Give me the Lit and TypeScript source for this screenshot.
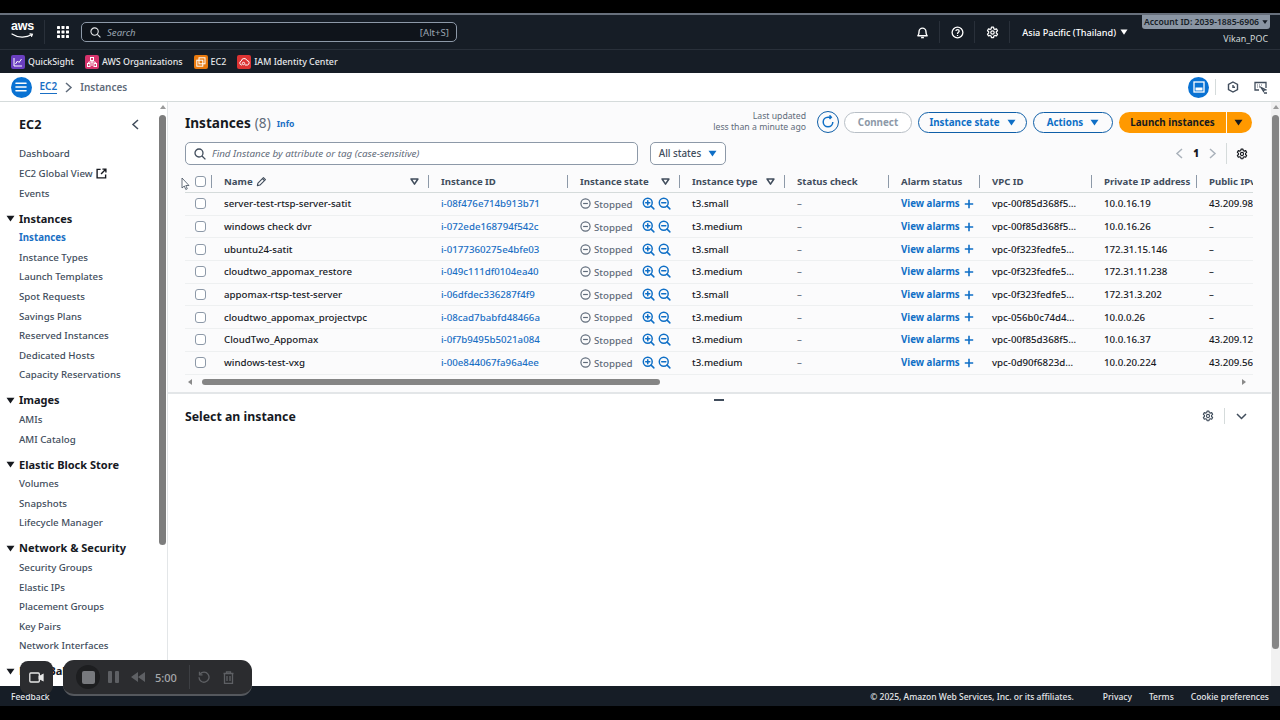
import { LitElement, html, css, svg } from 'lit';
import { customElement } from 'lit/decorators.js';

const rows = [
  ['server-test-rtsp-server-satit', 'i-08f476e714b913b71', 't3.small', 'vpc-00f85d368f5…', '10.0.16.19', '43.209.98'],
  ['windows check dvr', 'i-072ede168794f542c', 't3.medium', 'vpc-00f85d368f5…', '10.0.16.26', '–'],
  ['ubuntu24-satit', 'i-0177360275e4bfe03', 't3.small', 'vpc-0f323fedfe5…', '172.31.15.146', '–'],
  ['cloudtwo_appomax_restore', 'i-049c111df0104ea40', 't3.medium', 'vpc-0f323fedfe5…', '172.31.11.238', '–'],
  ['appomax-rtsp-test-server', 'i-06dfdec336287f4f9', 't3.small', 'vpc-0f323fedfe5…', '172.31.3.202', '–'],
  ['cloudtwo_appomax_projectvpc', 'i-08cad7babfd48466a', 't3.medium', 'vpc-056b0c74d4…', '10.0.0.26', '–'],
  ['CloudTwo_Appomax', 'i-0f7b9495b5021a084', 't3.medium', 'vpc-00f85d368f5…', '10.0.16.37', '43.209.12'],
  ['windows-test-vxg', 'i-00e844067fa96a4ee', 't3.medium', 'vpc-0d90f6823d…', '10.0.20.224', '43.209.56'],
];

const sideNav = [
  { items: ['Dashboard', 'EC2 Global View', 'Events'] },
  { title: 'Instances', items: ['Instances', 'Instance Types', 'Launch Templates', 'Spot Requests', 'Savings Plans', 'Reserved Instances', 'Dedicated Hosts', 'Capacity Reservations'] },
  { title: 'Images', items: ['AMIs', 'AMI Catalog'] },
  { title: 'Elastic Block Store', items: ['Volumes', 'Snapshots', 'Lifecycle Manager'] },
  { title: 'Network & Security', items: ['Security Groups', 'Elastic IPs', 'Placement Groups', 'Key Pairs', 'Network Interfaces'] },
  { title: 'Load Balancing', items: [] },
];

const headers = [
  { label: 'Name', filter: true, edit: true },
  { label: 'Instance ID' },
  { label: 'Instance state', filter: true },
  { label: 'Instance type', filter: true },
  { label: 'Status check' },
  { label: 'Alarm status' },
  { label: 'VPC ID' },
  { label: 'Private IP address' },
  { label: 'Public IPv4' },
];

const gear = (size: number, color = 'currentColor') => html`<svg width=${size} height=${size} viewBox="0 0 16 16" fill="none" stroke=${color} stroke-width="1.5" stroke-linejoin="round"><path d="M6.7 1.5h2.6l.4 2 1.3.7 1.9-.7 1.3 2.3-1.5 1.3v1.6l1.5 1.3-1.3 2.3-1.9-.7-1.3.7-.4 2H6.7l-.4-2-1.3-.7-1.9.7-1.3-2.3 1.5-1.3V7.1L1.8 5.8l1.3-2.3 1.9.7 1.3-.7z"/><circle cx="8" cy="8" r="2.1"/></svg>`;

const caret = (size: number, color: string) => html`<svg class="caret" width=${size} height=${size} viewBox="0 0 10 10"><path d="M.6 2h8.8L5 8.4z" fill=${color}/></svg>`;

const filterCaret = html`<svg class="filter" width="9" height="9" viewBox="0 0 10 10" fill="none" stroke="#414d5c" stroke-width="1.7" stroke-linejoin="round"><path d="M1.2 2.2h7.6L5 8z"/></svg>`;

const zoomIcon = (plus: boolean) => html`<svg width="13" height="13" viewBox="0 0 14 14" fill="none" stroke="#0f6fc6" stroke-width="1.6" stroke-linecap="round"><circle cx="6.2" cy="6.2" r="4.8"/><path d="M9.8 9.8l3 3M4 6.2h4.4"/>${plus ? svg`<path d="M6.2 4v4.4"/>` : ''}</svg>`;

const Chevron = (dir: 'l' | 'r', color: string) => html`<svg width="9" height="11" viewBox="0 0 9 11" fill="none" stroke=${color} stroke-width="1.5"><path d=${dir === 'l' ? 'M7 1L2 5.5 7 10' : 'M2 1l5 4.5L2 10'}/></svg>`;

@customElement('app-root')
export class AppRoot extends LitElement {
  static styles = css`
    :host {
      display: block;
      width: 1280px;
      height: 720px;
      overflow: hidden;
      position: relative;
      background: #000;
      font-family: 'Noto Sans', 'Open Sans', sans-serif;
      font-size: 10px;
      color: #16191f;
    }
    * { box-sizing: border-box; }
    svg { display: block; flex: none; }

    .page { display: flex; flex-direction: column; height: 720px; }
    .black-top { height: 13px; background: #000; flex: none; }
    .black-bottom { height: 14px; background: #000; flex: none; }
    .edge { height: 2px; background: #68707c; flex: none; }

    /* top nav */
    .nav {
      height: 35px; flex: none; background: #161d26; color: #e6e8ea;
      display: flex; align-items: center; position: relative;
      border-bottom: 1px solid #29303a;
    }
    .logo { width: 45px; height: 35px; display: flex; flex-direction: column; align-items: center; padding: 8px 0 0 1px; border-right: 1px solid #29303a; height: 24px; padding-top: 0; }
    .logo span { font: 700 12.5px/13px 'Liberation Sans', sans-serif; color: #fff; letter-spacing: -0.2px; }
    .apps { width: 36px; display: flex; justify-content: center; }
    .search {
      width: 376px; height: 20px; border: 1px solid #8d99a8; border-radius: 5px;
      display: flex; align-items: center; gap: 6px; padding: 0 7px 0 8px;
      color: #9aa5b1; font-size: 9.6px; background: #0f141b;
    }
    .search em { flex: 1; font-style: italic; }
    .nav-right { margin-left: auto; display: flex; align-items: center; height: 24px; color: #fff; }
    .nav-icon { width: 35px; height: 22px; display: flex; align-items: center; justify-content: center; border-right: 1px solid #29303a; }
    .nav-icon.last { margin-right: 12px; }
    .region { display: flex; align-items: center; gap: 4px; font-size: 9.1px; font-weight: 500; margin-right: 152px; }
    .account {
      position: absolute; right: 10px; top: 0; width: 128px; height: 14px;
      background: #8a95a3; color: #161d26; font-size: 8.6px; font-weight: 600;
      border-radius: 0 0 3px 3px; display: flex; align-items: center; justify-content: center; gap: 3px;
    }
    .user { position: absolute; right: 12px; top: 17px; font-size: 8.9px; color: #d5dbdb; }

    /* bookmarks */
    .marks {
      height: 23px; flex: none; background: #161d26; color: #e6e8ea;
      display: flex; align-items: center; padding-left: 11px; gap: 11px; font-size: 8.9px; font-weight: 500;
    }
    .mark { display: flex; align-items: center; gap: 3px; }
    .mark i { width: 14px; height: 14px; border-radius: 2px; display: flex; align-items: center; justify-content: center; }

    /* breadcrumb */
    .crumbs {
      height: 29px; flex: none; background: #fff; border-bottom: 1px solid #d5dbdb;
      display: flex; align-items: center; padding: 0 13px 0 10.5px; font-size: 10px;
    }
    .round { width: 21px; height: 21px; border-radius: 50%; background: #0972d3; display: flex; align-items: center; justify-content: center; }
    .crumb-link { color: #1a6fc4; font-weight: 600; border-bottom: 1px solid #1a6fc4; margin-left: 8px; line-height: 13px; }
    .crumb-sep { margin: 0 7px; }
    .crumb-now { color: #5f6b7a; font-weight: 600; }
    .crumb-right { margin-left: auto; display: flex; align-items: center; }
    .vline { width: 1px; background: #d5dbdb; }

    /* body */
    .body { flex: 1; display: flex; min-height: 0; background: #fff; }
    .side { width: 168px; flex: none; position: relative; border-right: 1px solid #e3e6e8; display: flex; overflow: hidden; }
    .side-list { flex: 1; min-width: 0; padding-left: 19px; }
    .side-title { display: flex; justify-content: space-between; align-items: center; height: 20px; margin: 12px 0 10.2px; padding-right: 18px; font-size: 12.6px; font-weight: 700; color: #16191f; }
    .side-head { position: relative; height: 19.6px; margin-top: 5.4px; display: flex; align-items: center; font-size: 11px; font-weight: 700; color: #16191f; white-space: nowrap; }
    .side-head svg { position: absolute; left: -13px; top: 6px; }
    .side-item { height: 19.6px; display: flex; align-items: center; gap: 3px; font-size: 9.7px; color: #414d5c; white-space: nowrap; font-weight: 500; }
    .side-item.on { color: #1a6fc4; font-weight: 700; }
    .sbar { width: 9px; flex: none; display: flex; flex-direction: column; align-items: center; }
    .sbar .up { width: 0; height: 0; border: 3px solid transparent; border-top: 0; border-bottom: 4px solid #9a9a9a; margin-top: 3px; }
    .sbar .thumb { width: 7px; background: #7d7d7d; border-radius: 4px; margin-top: 6px; }
    .side .sbar { margin-right: 0; }
    .side .sbar .thumb { height: 430px; }
    .page-bar { background: #f1f1f1; }
    .page-bar .thumb { height: 534px; background: #858585; }

    .main { flex: 1; min-width: 0; display: flex; flex-direction: column; background: #fff; }
    .top-panel { height: 292px; flex: none; background: #fbfbfc; border-bottom: 2px solid #e3e6e8; padding: 0 19px 0 17px; }
    .title-row { height: 40px; display: flex; align-items: center; padding-top: 0; }
    .title { font-size: 13.6px; font-weight: 700; color: #16191f; }
    .count { font-size: 13.6px; color: #5f6b7a; margin-left: 4px; font-weight: 400; }
    .info { color: #1a6fc4; font-size: 8.6px; font-weight: 700; margin-left: 6px; padding-top: 3px; }
    .actions { margin-left: auto; display: flex; align-items: center; gap: 6px; }
    .updated { text-align: right; font-size: 8.7px; line-height: 11.5px; color: #5f6b7a; margin-right: 5px; }
    .btn {
      height: 21px; border-radius: 11px; border: 1.5px solid #0f5fa8; color: #0f6fc6;
      font-size: 9.8px; font-weight: 700; display: flex; align-items: center; justify-content: center; gap: 7px;
    }
    .btn.off { width: 68px; border-color: #b8bfc6; color: #8d99a8; background: #fff; }
    .btn.refresh { width: 22px; height: 22px; border-radius: 50%; margin-right: 0; padding: 0; }
    .launch { display: flex; height: 21px; color: #16191f; font-size: 9.8px; font-weight: 700; gap: 1px; }
    .launch div { background: #ff9900; display: flex; align-items: center; justify-content: center; }
    .launch .l { width: 107px; border-radius: 11px 0 0 11px; }
    .launch .r { width: 25px; border-radius: 0 11px 11px 0; padding-right: 2px; }

    .filter-row { height: 23px; display: flex; align-items: center; margin-top: 0; }
    .find {
      width: 453px; height: 23px; border: 1px solid #8d99a8; border-radius: 5px; background: #fff;
      display: flex; align-items: center; gap: 6px; padding-left: 8px; color: #5f6b7a; font-size: 9.8px; font-style: italic;
    }
    .states {
      width: 76px; height: 23px; margin-left: 12px; border: 1px solid #8d99a8; border-radius: 5px; background: #fff;
      display: flex; align-items: center; justify-content: center; gap: 7px; font-size: 9.8px; color: #414d5c; font-weight: 500;
    }
    .pager { margin-left: auto; display: flex; align-items: center; height: 23px; font-size: 9.8px; font-weight: 700; }
    .pager b { width: 24px; text-align: center; }
    .pager .vline { height: 21px; margin: 0 9px 0 9px; }

    .table { margin-top: 6px; overflow: hidden; width: 1068px; }
    .row {
      display: grid;
      grid-template-columns: 27px 217px 139px 112px 105px 104px 91px 112px 105px 56px;
      height: 22.7px; align-items: center; border-bottom: 1px solid #eef0f1;
      font-size: 9.7px; color: #16191f; white-space: nowrap; font-weight: 500;
    }
    .row.head { height: 22px; border-bottom: 1px solid #d5dbdb; font-weight: 700; color: #414d5c; font-size: 9.6px; }
    .row > div { padding-left: 12px; overflow: hidden; min-width: 0; }
    .row > .check { padding-left: 10px; }
    .box { width: 11px; height: 11px; border: 1px solid #8d99a8; border-radius: 3px; background: #fff; }
    .hcell { position: relative; display: flex; align-items: center; gap: 3px; height: 13px; padding-right: 9px; }
    .hcell.div::after, .check.div::after { content: ''; position: absolute; right: 0; top: 0; bottom: 0; width: 1px; background: #8d99a8; }
    .check.div { position: relative; height: 13px; display: flex; align-items: center; }
    .filter { margin-left: auto; margin-right: 1px; }
    .link { color: #1a6fc4; font-weight: 500; }
    .alarm { color: #0f6fc6; font-weight: 700; display: flex; align-items: center; gap: 4px; }
    .state { display: flex; align-items: center; color: #5f6b7a; }
    .state span { margin: 1px 9px 0 3px; }
    .state svg + span + svg { margin-right: 3px; }
    .muted { color: #5f6b7a; }

    .hscroll { height: 14px; margin-top: 0; display: flex; align-items: center; position: relative; padding: 0 3px; margin-top: 0; }
    .hthumb { width: 458px; height: 6px; margin-left: 10px; border-radius: 3px; background: #858585; }
    .arr { width: 0; height: 0; border: 3px solid transparent; }
    .arr.l { border-left: 0; border-right: 4px solid #8a8a8a; }
    .arr.r { border-right: 0; border-left: 4px solid #8a8a8a; margin-left: auto; margin-right: 3px; }

    .bottom { flex: 1; background: #fff; padding: 0 19px 0 17px; position: relative; }
    .grip { position: absolute; left: 546px; top: 5px; width: 10px; height: 2px; background: #414d5c; }
    .bottom-row { height: 44px; display: flex; align-items: center; }
    .bottom-row h2 { margin: 0; font-size: 12.3px; font-weight: 700; color: #16191f; }
    .bottom-tools { margin-left: auto; display: flex; align-items: center; }
    .bottom-tools .vline { height: 16px; margin: 0 11px 0 10px; }

    .foot {
      height: 20px; flex: none; background: #161d26; color: #e6e8ea; font-size: 8.5px;
      display: flex; align-items: center; padding: 0 11px; gap: 17px; font-weight: 500;
    }
    .foot .first { margin-right: auto; }
    .foot .copy { margin-right: 12px; }

    /* screen recorder overlay */
    .cam {
      position: absolute; left: 20px; top: 661px; width: 33px; height: 33px; border-radius: 8px;
      background: #2b2c2f; display: flex; align-items: center; justify-content: center;
    }
    .rec {
      position: absolute; left: 63px; top: 660px; width: 189px; height: 36px; border-radius: 11px;
      background: #2b2c2f; border-bottom: 2px solid #55585d; display: flex; align-items: center; padding-left: 13px;
      color: #a6a8ab; font-size: 11px; font-weight: 500;
    }
    .stop { width: 24px; height: 24px; border-radius: 50%; background: #1d1e20; display: flex; align-items: center; justify-content: center; margin-right: 8px; }
    .stop i { width: 13px; height: 13px; background: #77797d; border-radius: 2px; display: block; }
    .rec .time { margin: 0 12px 0 10px; }
    .rec .sep { width: 1px; height: 24px; background: #3d3f43; margin-right: 8px; }
    .cursor { position: absolute; left: 181px; top: 177px; }
  `;

  private renderSide() {
    return html`
      <aside class="side">
        <div class="side-list">
          <div class="side-title">EC2 ${Chevron('l', '#414d5c')}</div>
          ${sideNav.map(
            (g) => html`
              ${g.title
                ? html`<div class="side-head">${caret(9, '#16191f')}${g.title}</div>`
                : ''}
              ${g.items.map(
                (it) => html`<div class="side-item ${g.title === 'Instances' && it === 'Instances' ? 'on' : ''}">
                  ${it}
                  ${it === 'EC2 Global View'
                    ? html`<svg width="11" height="11" viewBox="0 0 12 12" fill="none" stroke="#16191f" stroke-width="1.5"><path d="M5 1.5H1.2v9.3h9.3V7M7 1.2h3.8V5M10.6 1.4L5.5 6.5"/></svg>`
                    : ''}
                </div>`
              )}
            `
          )}
        </div>
        <div class="sbar"><div class="up"></div><div class="thumb"></div></div>
      </aside>
    `;
  }

  private renderTable() {
    return html`
      <div class="table">
        <div class="row head">
          <div class="check div"><div class="box"></div></div>
          ${headers.map(
            (h, i) => html`<div class="hcell ${i < headers.length - 1 ? 'div' : ''}">
              ${h.label}
              ${h.edit
                ? html`<svg width="11" height="11" viewBox="0 0 12 12" fill="none" stroke="#414d5c" stroke-width="1.2" stroke-linejoin="round"><path d="M1.5 10.5l.6-2.8 6-6 2.2 2.2-6 6z"/><path d="M7 2.8l2.2 2.2"/></svg>`
                : ''}
              ${h.filter ? filterCaret : ''}
            </div>`
          )}
        </div>
        ${rows.map(
          (r) => html`<div class="row">
            <div class="check"><div class="box"></div></div>
            <div>${r[0]}</div>
            <div class="link">${r[1]}</div>
            <div class="state">
              <svg width="11" height="11" viewBox="0 0 12 12" fill="none" stroke="#5f6b7a" stroke-width="1.3"><circle cx="6" cy="6" r="5"/><path d="M3.4 6h5.2"/></svg>
              <span>Stopped</span>${zoomIcon(true)}${zoomIcon(false)}
            </div>
            <div>${r[2]}</div>
            <div class="muted">–</div>
            <div class="alarm">View alarms
              <svg width="10" height="10" viewBox="0 0 10 10" stroke="#0f6fc6" stroke-width="1.6"><path d="M5 .8v8.4M.8 5h8.4"/></svg>
            </div>
            <div>${r[3]}</div>
            <div>${r[4]}</div>
            <div>${r[5]}</div>
          </div>`
        )}
      </div>
      <div class="hscroll"><div class="arr l"></div><div class="hthumb"></div><div class="arr r"></div></div>
    `;
  }

  render() {
    return html`
      <div class="page">
        <div class="black-top"></div>
        <div class="edge"></div>
        <header class="nav">
          <div class="logo" style="margin-left:0">
            <span>aws</span>
            <svg width="23" height="6" viewBox="0 0 23 6" fill="none" stroke="#fff" stroke-width="1.2" stroke-linecap="round"><path d="M1 1c6 4 14 4 20 .6M19 .8l2.4.4-.8 2.2"/></svg>
          </div>
          <div class="apps">
            <svg width="12" height="12" viewBox="0 0 12 12" fill="#fff">
              ${[0, 4.5, 9].flatMap((y) => [0, 4.5, 9].map((x) => svg`<rect x=${x} y=${y} width="3" height="3" rx=".4"/>`))}
            </svg>
          </div>
          <div class="search">
            <svg width="11" height="11" viewBox="0 0 12 12" fill="none" stroke="#e6e8ea" stroke-width="1.2"><circle cx="5" cy="5" r="4"/><path d="M8 8l3.4 3.4"/></svg>
            <em>Search</em><span>[Alt+S]</span>
          </div>
          <div class="nav-right">
            <div class="nav-icon">
              <svg width="13" height="13" viewBox="0 0 14 14" fill="none" stroke="#fff" stroke-width="1.5" stroke-linejoin="round"><path d="M2 10.5c1-1 1.3-2 1.3-4.5a3.7 3.7 0 017.4 0c0 2.500.3 3.500 1.300 4.500z"/><path d="M5.500 12.500h3"/></svg>
            </div>
            <div class="nav-icon">
              <svg width="13" height="13" viewBox="0 0 14 14" fill="none" stroke="#fff" stroke-width="1.4"><circle cx="7" cy="7" r="5.800"/><path d="M5.300 5.500c0-2.200 3.500-2.200 3.500 0 0 1.400-1.800 1.300-1.800 3M7 9.600v1.300"/></svg>
            </div>
            <div class="nav-icon last">${gear(13, '#fff')}</div>
            <div class="region">Asia Pacific (Thailand) ${caret(8, '#fff')}</div>
          </div>
          <div class="account">Account ID: 2039-1885-6906 ${caret(6, '#161d26')}</div>
          <div class="user">Vikan_POC</div>
        </header>
        <div class="marks">
          <div class="mark"><i style="background:#6a3fc0"><svg width="10" height="10" viewBox="0 0 10 10" fill="none" stroke="#fff" stroke-width="1"><path d="M1 1v8h8M2.500 7l2-3 1.500 1.500L8.500 2"/></svg></i>QuickSight</div>
          <div class="mark"><i style="background:#d6336c"><svg width="10" height="10" viewBox="0 0 10 10" fill="none" stroke="#fff" stroke-width="1"><rect x="3.500" y=".5" width="3" height="3"/><rect x=".5" y="6.500" width="2.500" height="3"/><rect x="7" y="6.500" width="2.500" height="3"/><path d="M5 3.500V9M1.700 6.500V5h6.600v1.500"/></svg></i>AWS Organizations</div>
          <div class="mark"><i style="background:#e8790d"><svg width="10" height="10" viewBox="0 0 10 10" fill="none" stroke="#fff" stroke-width="1"><rect x="3" y=".8" width="6" height="6"/><rect x=".8" y="3.200" width="6" height="6"/></svg></i>EC2</div>
          <div class="mark"><i style="background:#dd3333"><svg width="11" height="10" viewBox="0 0 11 10" fill="none" stroke="#fff" stroke-width="1"><path d="M3 8H2.500a2 2 0 01-.3-3.900A3 3 0 018 3.500a2.300 2.300 0 01.500 4.500H6"/><circle cx="4.500" cy="6.500" r="1.200"/></svg></i>IAM Identity Center</div>
        </div>
        <nav class="crumbs">
          <div class="round">
            <svg width="12" height="10" viewBox="0 0 12 10" stroke="#fff" stroke-width="1.6" stroke-linecap="round"><path d="M1 1.200h10M1 5h10M1 8.800h10"/></svg>
          </div>
          <span class="crumb-link">EC2</span>
          <span class="crumb-sep">${Chevron('r', '#5f6b7a')}</span>
          <span class="crumb-now">Instances</span>
          <div class="crumb-right">
            <div class="round">
              <svg width="12" height="12" viewBox="0 0 12 12" fill="none" stroke="#fff" stroke-width="1.300"><rect x="1" y="1" width="10" height="10"/><rect x="2.500" y="6.500" width="7" height="3" fill="#fff" stroke="none"/></svg>
            </div>
            <div class="vline" style="height:16px;margin:0 11px 0 6px"></div>
            <svg style="margin-right:15px" width="12" height="12" viewBox="0 0 12 12" fill="none" stroke="#414d5c" stroke-width="1.400"><path d="M6 1l4.500 2.500v5L6 11 1.500 8.500v-5z"/><path d="M6 4v2.300h2"/></svg>
            <svg width="13" height="13" viewBox="0 0 13 13" fill="none" stroke="#414d5c" stroke-width="1.300"><path d="M5 9H1V1.500h11V7"/><path d="M3 4h.8M5 4h.8M7 4h.8M3 6h.8M5 6h.8" stroke-width="1.100"/><path d="M7 6.500l2.500 3.800L10 9l1.500-.2zM10 12h3" /></svg>
          </div>
        </nav>
        <div class="body">
          ${this.renderSide()}
          <main class="main">
            <section class="top-panel">
              <div class="title-row">
                <span class="title">Instances</span><span class="count">(8)</span><span class="info">Info</span>
                <div class="actions">
                  <div class="updated">Last updated<br />less than a minute ago</div>
                  <div class="btn refresh">
                    <svg width="14" height="14" viewBox="0 0 14 14" fill="none" stroke="#0f6fc6" stroke-width="1.500"><path d="M11.800 7A4.800 4.800 0 117 2.200h3"/><path d="M8.500.4L10.300 2.200 8.500 4" /></svg>
                  </div>
                  <div class="btn off" style="margin-left:-1px">Connect</div>
                  <div class="btn" style="width:109px">Instance state ${caret(9, '#0f6fc6')}</div>
                  <div class="btn" style="width:80px">Actions ${caret(9, '#0f6fc6')}</div>
                  <div class="launch"><div class="l">Launch instances</div><div class="r">${caret(9, '#16191f')}</div></div>
                </div>
              </div>
              <div class="filter-row" style="margin-top:0">
                <div class="find">
                  <svg width="12" height="12" viewBox="0 0 12 12" fill="none" stroke="#414d5c" stroke-width="1.300"><circle cx="5" cy="5" r="4"/><path d="M8 8l3.400 3.400"/></svg>
                  Find Instance by attribute or tag (case-sensitive)
                </div>
                <div class="states">All states ${caret(9, '#0f6fc6')}</div>
                <div class="pager">
                  ${Chevron('l', '#aab2bb')}<b>1</b>${Chevron('r', '#aab2bb')}
                  <div class="vline"></div>
                  ${gear(12, '#16191f')}
                  <span style="width:4px"></span>
                </div>
              </div>
              ${this.renderTable()}
            </section>
            <section class="bottom">
              <div class="grip"></div>
              <div class="bottom-row">
                <h2>Select an instance</h2>
                <div class="bottom-tools">
                  ${gear(12, '#414d5c')}
                  <div class="vline"></div>
                  <svg style="margin-right:5px" width="11" height="7" viewBox="0 0 11 7" fill="none" stroke="#414d5c" stroke-width="1.500"><path d="M1 1l4.500 4.500L10 1"/></svg>
                </div>
              </div>
            </section>
          </main>
          <div class="sbar page-bar"><div class="up"></div><div class="thumb"></div></div>
        </div>
        <footer class="foot">
          <span class="first">Feedback</span>
          <span class="copy">© 2025, Amazon Web Services, Inc. or its affiliates.</span>
          <span>Privacy</span><span>Terms</span><span>Cookie preferences</span>
        </footer>
        <div class="black-bottom"></div>
      </div>

      <svg class="cursor" width="9" height="14" viewBox="0 0 9 14" fill="#fff" stroke="#414d5c" stroke-width=".8"><path d="M1 1v10l2.300-2 1.500 3.500 1.500-.7L4.800 8.500H8z"/></svg>
      <div class="cam">
        <svg width="15" height="11" viewBox="0 0 15 11" fill="none" stroke="#e8e8e8" stroke-width="1.300"><rect x=".8" y="1" width="9.500" height="9" rx="1"/><path d="M10.300 4.500l3.700-2v6l-3.700-2z" fill="#e8e8e8"/></svg>
      </div>
      <div class="rec">
        <div class="stop"><i></i></div>
        <svg style="margin-right:12px" width="11" height="12" viewBox="0 0 11 12" fill="#5e6064"><rect width="4" height="12" rx="1"/><rect x="7" width="4" height="12" rx="1"/></svg>
        <svg width="14" height="10" viewBox="0 0 14 10" fill="#5e6064"><path d="M7 0v10L0 5zM14 0v10L7 5z"/></svg>
        <span class="time">5:00</span>
        <div class="sep"></div>
        <svg style="margin-right:13px" width="12" height="12" viewBox="0 0 12 12" fill="none" stroke="#5e6064" stroke-width="1.300"><path d="M2 3.200a5 5 0 11-1 3"/><path d="M1.500.8v3h3"/></svg>
        <svg width="11" height="13" viewBox="0 0 11 13" fill="none" stroke="#5e6064" stroke-width="1.300"><path d="M.5 2.500h10M3.500 2.500V.8h4v1.700M1.500 2.500v10h8v-10M4 5v5M7 5v5"/></svg>
      </div>
    `;
  }
}
